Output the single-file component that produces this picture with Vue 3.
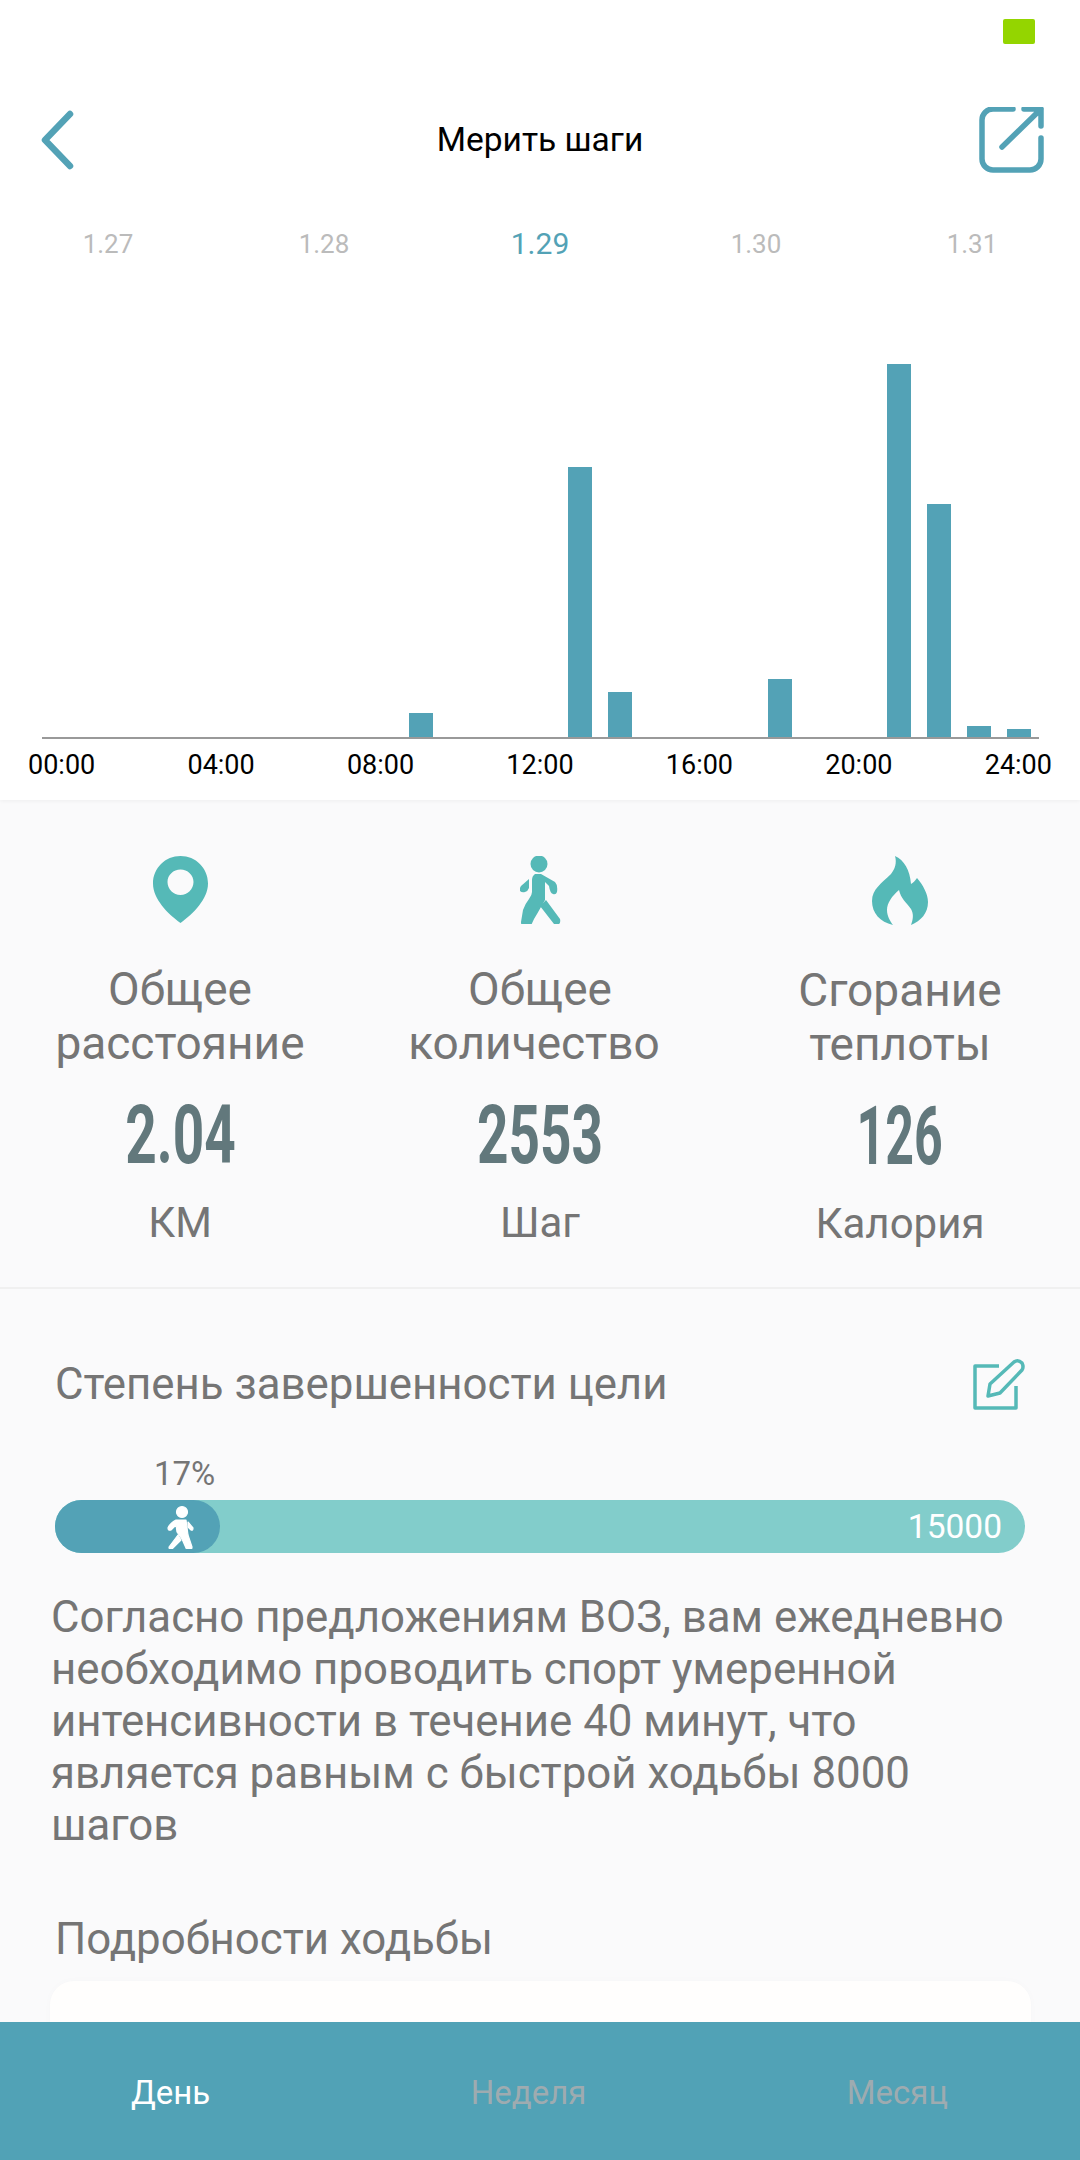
<template>
  <div class="page">
    <div class="content">
      <section class="top-panel">
        <div class="status-bar"><span class="battery"></span></div>

        <header class="nav">
          <svg class="back-icon" viewBox="0 0 34 60" width="34" height="60">
            <path d="M30 4 5 30l25 26" />
          </svg>
          <h1>Мерить шаги</h1>
          <svg class="share-icon" viewBox="9 11 66 66" width="66" height="66">
            <path d="M43 13H23A11 11 0 0 0 12 24V63A11 11 0 0 0 23 74H60A11 11 0 0 0 71 63V42" />
            <path d="M54 13H71V30M71 13 32 51" />
          </svg>
        </header>

        <nav class="dates">
          <span v-for="d in dates" :key="d" :class="{ active: d === '1.29' }">{{ d }}</span>
        </nav>

        <div class="plot">
          <div v-for="(h, i) in hours" :key="i" class="plot-col">
            <i v-if="h" class="bar" :style="{ height: h + 'px' }"></i>
          </div>
        </div>
        <div class="ticks">
          <span v-for="t in ticks" :key="t">{{ t }}</span>
        </div>
      </section>

      <section class="stats">
        <div class="stat">
          <svg class="stat-icon" viewBox="0 0 55 68" width="55" height="68">
            <path fill-rule="evenodd" d="M27.5 0C42.7 0 55 12 55 27.5 55 43 40 58 27.5 67 15 58 0 43 0 27.5 0 12 12.3 0 27.5 0ZM27.5 13.5C20.4 13.5 14.5 19 14.5 26S20.4 39 27.5 39 40.5 33 40.5 26 34.6 13.5 27.5 13.5Z" />
          </svg>
          <p class="stat-label">Общее<br />расстояние</p>
          <strong class="stat-value"><span>2.04</span></strong>
          <p class="stat-unit">КМ</p>
        </div>
        <div class="stat">
          <svg class="stat-icon" viewBox="9 6 41 68" width="41" height="68">
            <ellipse cx="28" cy="14" rx="8.5" ry="8.5" />
            <path d="M24 24H30L44 32Q47 35 46 42 45 45 42 44 39 43 38 36L34 32V50L26 64Q22 70 20 76 17 79 13 78 10 76 10 72L12 60Q14 54 18 49 21 45 21 42V30Q21 26 24 24Z" />
            <path d="M18 29 10 36Q8 39 9 41 11 43 14 42 17 41 18 38Z" />
            <path d="M35 50 49 69Q50 73 47 75 44 76 43 74L29 56Z" />
          </svg>
          <p class="stat-label">Общее<br /><span class="shift">количество</span></p>
          <strong class="stat-value"><span>2553</span></strong>
          <p class="stat-unit">Шаг</p>
        </div>
        <div class="stat">
          <svg class="stat-icon" viewBox="12 6 56 69" width="56" height="69">
            <path d="M35 6C44 10 50 20 51 34 53 33 55 31 57 28 63 35 68 44 68 52 68 63 61 71 51 75 53 70 54 64 51 59 46 52 41 49 39 40 32 46 27 53 27 60 27 66 30 71 33 75 20 72 12 63 12 51 12 39 22 33 31 24 35 19 37 13 35 6Z" />
          </svg>
          <p class="stat-label">Сгорание<br />теплоты</p>
          <strong class="stat-value"><span class="narrow">126</span></strong>
          <p class="stat-unit">Калория</p>
        </div>
      </section>

      <section class="goal">
        <div class="goal-head">
          <h2>Степень завершенности цели</h2>
          <svg class="edit-icon" viewBox="9 5 52 52" width="52" height="52">
            <path d="M35 13H11V55H52V33" />
            <path d="M24 43 26 31 50 9Q54 6 58 10 60 14 58 17L36 40Z" />
          </svg>
        </div>

        <div class="percent">17%</div>
        <div class="progress">
          <div class="progress-fill" :style="{ width: fillWidth + 'px' }">
            <svg viewBox="15 8 30 44" width="30" height="44">
              <circle cx="32" cy="15" r="5.5" />
              <path d="M26 23H36L38 38 42 50Q42 53 39 53 37 53 36 51L32 42 27 35 26 28 21 33Q18 34 18 31 19 27 26 23Z" />
              <path d="M28 38 19 50Q19 53 22 52L31 43Z" />
              <path d="M38 25 43 31Q43 34 41 33L38 30Z" />
            </svg>
          </div>
          <span class="progress-max">15000</span>
        </div>

        <p class="advice">
          Согласно предложениям ВОЗ, вам ежедневно необходимо проводить спорт умеренной интенсивности в течение 40 минут, что является равным с быстрой ходьбы 8000 шагов
        </p>

        <h2 class="walk-title">Подробности ходьбы</h2>
        <div class="walk-card"></div>
      </section>
    </div>

    <footer class="tabs">
      <span class="active">День</span>
      <span>Неделя</span>
      <span>Месяц</span>
    </footer>
  </div>
</template>

<script setup>
const dates = ['1.27', '1.28', '1.29', '1.30', '1.31']
const ticks = ['00:00', '04:00', '08:00', '12:00', '16:00', '20:00', '24:00']
const fillWidth = 165

// bar height per hour slot, 0 = nothing walked
const hours = Array(25).fill(0)
hours[9] = 24
hours[13] = 270
hours[14] = 45
hours[18] = 58
hours[21] = 373
hours[22] = 233
hours[23] = 11
hours[24] = 8
</script>

<style scoped>
.page {
  display: flex;
  flex-direction: column;
  height: 2160px;
  overflow: hidden;
  background: #fafafb;
  font-family: Roboto, "Noto Sans", sans-serif;
  color: #757575;
}

.content {
  flex: 1;
  min-height: 0;
  overflow: hidden;
}

.top-panel {
  height: 800px;
  background: #fff;
  box-shadow: 0 1px 4px rgba(0, 0, 0, 0.05);
}

.status-bar {
  display: flex;
  justify-content: flex-end;
  height: 100px;
  padding: 19px 45px 0 0;
  box-sizing: border-box;
}

.battery {
  width: 32px;
  height: 25px;
  border-radius: 2px;
  background: #94d500;
}

.nav {
  display: grid;
  grid-template-columns: 1fr auto 1fr;
  align-items: center;
  height: 80px;
  padding: 0 35px;
}

.nav h1 {
  margin: 0 0 2px;
  font-size: 33.5px;
  font-weight: 400;
  color: #000;
}

.back-icon {
  margin-left: 5px;
}

.back-icon path,
.share-icon path {
  fill: none;
  stroke: #53a2b6;
  stroke-linecap: round;
  stroke-linejoin: round;
}

.back-icon path {
  stroke-width: 6.5;
}

.share-icon path {
  stroke-width: 5.5;
}

.share-icon {
  justify-self: end;
}

.dates {
  display: grid;
  grid-template-columns: repeat(5, 1fr);
  padding-top: 44px;
  text-align: center;
  font-size: 26px;
  line-height: 40px;
  color: #bbb;
}

.dates .active {
  font-size: 30px;
  color: #53a2b6;
}

.plot {
  display: grid;
  grid-template-columns: repeat(25, 1fr);
  align-items: end;
  height: 473px;
  margin: 0 41px 0 42px;
  border-bottom: 2px solid #999;
}

.plot-col {
  display: flex;
  justify-content: center;
}

.bar {
  width: 24px;
  background: #53a2b6;
}

.ticks {
  display: flex;
  justify-content: space-between;
  padding: 9px 28px 0 28px;
  font-size: 27px;
  line-height: 34px;
  color: #000;
}

.stats {
  display: grid;
  grid-template-columns: repeat(3, 1fr);
  height: 489px;
  box-sizing: border-box;
  padding-top: 56px;
  border-bottom: 2px solid #f0f0f0;
  text-align: center;
}

.stat-icon {
  display: block;
  margin: 0 auto;
  fill: #55b9b7;
}

.stat-label {
  margin: 38px 0 0;
  font-size: 46px;
  line-height: 54px;
}

.shift {
  margin-right: 12px;
}

.stat-value {
  display: block;
  margin-top: 24px;
  font-size: 82px;
  line-height: 82px;
  color: #62787c;
}

.stat-value span {
  display: inline-block;
  transform: scaleX(0.67);
}

.stat-value .narrow {
  transform: scaleX(0.61);
}

.stat-unit {
  margin: 20px 0 0;
  font-size: 42px;
  line-height: 54px;
}

.goal {
  padding: 0 55px 0 51px;
}

.goal-head {
  display: flex;
  justify-content: space-between;
  align-items: center;
  height: 52px;
  margin-top: 69px;
  padding-left: 4px;
}

h2 {
  margin: 0;
  font-size: 43.8px;
  font-weight: 400;
}

.edit-icon path {
  fill: none;
  stroke: #55b9b7;
  stroke-width: 3.5;
  stroke-linejoin: round;
}

.percent {
  margin: 46px 0 0 103px;
  font-size: 33px;
  line-height: 36px;
}

.progress {
  position: relative;
  display: flex;
  justify-content: flex-end;
  align-items: center;
  height: 53px;
  margin: 8px 0 0 4px;
  padding-right: 23px;
  border-radius: 27px;
  background: #82cdcb;
}

.progress-fill {
  position: absolute;
  left: 0;
  top: 0;
  display: flex;
  justify-content: flex-end;
  align-items: center;
  height: 100%;
  padding-right: 25px;
  box-sizing: border-box;
  border-radius: 27px;
  background: #53a2b6;
  fill: #fff;
  stroke: #fff;
  stroke-width: 1.2;
  stroke-linejoin: round;
}

.progress-max {
  font-size: 33.5px;
  color: #fff;
}

.advice {
  margin: 38px 0 0;
  font-size: 43.8px;
  line-height: 52px;
}

.walk-title {
  margin: 62px 0 0 4px;
}

.walk-card {
  height: 200px;
  margin: 16px -6px 0 -1px;
  border-radius: 24px;
  background: #fffefd;
  box-shadow: 0 0 8px rgba(0, 0, 0, 0.02);
}

.tabs {
  display: flex;
  justify-content: space-between;
  align-items: center;
  flex-shrink: 0;
  height: 138px;
  padding: 3px 132px 0 131px;
  box-sizing: border-box;
  background: #51a2b6;
  font-size: 33px;
  color: #9eabb0;
}

.tabs .active {
  color: #fff;
}
</style>

<style>
html,
body {
  margin: 0;
  background: #fafafb;
}
</style>
